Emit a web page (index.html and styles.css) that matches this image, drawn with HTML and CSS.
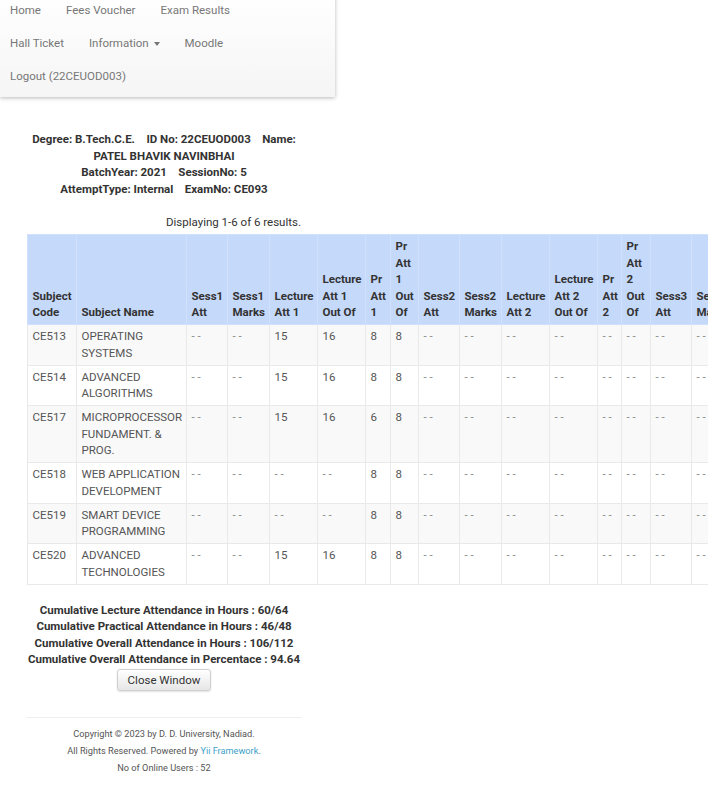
FILE: index.html
```html
<!DOCTYPE html>
<html>
<head>
<meta charset="utf-8">
<link rel="stylesheet" href="styles.css">
</head>
<body>
<div class="navbar">
  <ul class="nav">
    <li><a href="#">Home</a></li>
    <li><a href="#">Fees Voucher</a></li>
    <li><a href="#">Exam Results</a></li>
    <li><a href="#">Hall Ticket</a></li>
    <li><a href="#">Information <span class="caret"></span></a></li>
    <li><a href="#">Moodle</a></li>
    <li><a href="#">Logout (22CEUOD003)</a></li>
  </ul>
</div>

<div class="page">
  <div class="info">
    <div>Degree: B.Tech.C.E.&nbsp;&nbsp;&nbsp; ID No: 22CEUOD003&nbsp;&nbsp;&nbsp; Name: PATEL BHAVIK NAVINBHAI</div>
    <div>BatchYear: 2021&nbsp;&nbsp;&nbsp; SessionNo: 5</div>
    <div>AttemptType: Internal&nbsp;&nbsp;&nbsp; ExamNo: CE093</div>
  </div>

  <div class="summary">Displaying 1-6 of 6 results.</div>

  <table class="items">
    <colgroup>
      <col class="c-code"><col class="c-name"><col class="c-sess"><col class="c-marks"><col class="c-lec"><col class="c-lec"><col class="c-pr"><col class="c-pro">
      <col class="c-sess"><col class="c-marks"><col class="c-lec"><col class="c-lec"><col class="c-pr2"><col class="c-pro2">
      <col class="c-sess"><col class="c-marks"><col class="c-lec"><col class="c-lec"><col class="c-pr"><col class="c-pro">
    </colgroup>
    <thead>
      <tr>
        <th>Subject Code</th>
        <th>Subject Name</th>
        <th>Sess1 Att</th>
        <th>Sess1 Marks</th>
        <th>Lecture Att 1</th>
        <th>Lecture Att 1 Out Of</th>
        <th>Pr Att 1</th>
        <th>Pr Att 1 Out Of</th>
        <th>Sess2 Att</th>
        <th>Sess2 Marks</th>
        <th>Lecture Att 2</th>
        <th>Lecture Att 2 Out Of</th>
        <th>Pr Att 2</th>
        <th>Pr Att 2 Out Of</th>
        <th>Sess3 Att</th>
        <th>Sess3 Marks</th>
        <th>Lecture Att 3</th>
        <th>Lecture Att 3 Out Of</th>
        <th>Pr Att 3</th>
        <th>Pr Att 3 Out Of</th>
      </tr>
    </thead>
    <tbody>
      <tr class="odd">
        <td>CE513</td><td>OPERATING SYSTEMS</td><td class="na">- -</td><td class="na">- -</td><td>15</td><td>16</td><td>8</td><td>8</td><td class="na">- -</td><td class="na">- -</td><td class="na">- -</td><td class="na">- -</td><td class="na">- -</td><td class="na">- -</td><td class="na">- -</td><td class="na">- -</td><td class="na">- -</td><td class="na">- -</td><td class="na">- -</td><td class="na">- -</td>
      </tr>
      <tr class="even">
        <td>CE514</td><td>ADVANCED ALGORITHMS</td><td class="na">- -</td><td class="na">- -</td><td>15</td><td>16</td><td>8</td><td>8</td><td class="na">- -</td><td class="na">- -</td><td class="na">- -</td><td class="na">- -</td><td class="na">- -</td><td class="na">- -</td><td class="na">- -</td><td class="na">- -</td><td class="na">- -</td><td class="na">- -</td><td class="na">- -</td><td class="na">- -</td>
      </tr>
      <tr class="odd">
        <td>CE517</td><td>MICROPROCESSOR FUNDAMENT. &amp; PROG.</td><td class="na">- -</td><td class="na">- -</td><td>15</td><td>16</td><td>6</td><td>8</td><td class="na">- -</td><td class="na">- -</td><td class="na">- -</td><td class="na">- -</td><td class="na">- -</td><td class="na">- -</td><td class="na">- -</td><td class="na">- -</td><td class="na">- -</td><td class="na">- -</td><td class="na">- -</td><td class="na">- -</td>
      </tr>
      <tr class="even">
        <td>CE518</td><td>WEB APPLICATION DEVELOPMENT</td><td class="na">- -</td><td class="na">- -</td><td class="na">- -</td><td class="na">- -</td><td>8</td><td>8</td><td class="na">- -</td><td class="na">- -</td><td class="na">- -</td><td class="na">- -</td><td class="na">- -</td><td class="na">- -</td><td class="na">- -</td><td class="na">- -</td><td class="na">- -</td><td class="na">- -</td><td class="na">- -</td><td class="na">- -</td>
      </tr>
      <tr class="odd">
        <td>CE519</td><td>SMART DEVICE PROGRAMMING</td><td class="na">- -</td><td class="na">- -</td><td class="na">- -</td><td class="na">- -</td><td>8</td><td>8</td><td class="na">- -</td><td class="na">- -</td><td class="na">- -</td><td class="na">- -</td><td class="na">- -</td><td class="na">- -</td><td class="na">- -</td><td class="na">- -</td><td class="na">- -</td><td class="na">- -</td><td class="na">- -</td><td class="na">- -</td>
      </tr>
      <tr class="even">
        <td>CE520</td><td>ADVANCED TECHNOLOGIES</td><td class="na">- -</td><td class="na">- -</td><td>15</td><td>16</td><td>8</td><td>8</td><td class="na">- -</td><td class="na">- -</td><td class="na">- -</td><td class="na">- -</td><td class="na">- -</td><td class="na">- -</td><td class="na">- -</td><td class="na">- -</td><td class="na">- -</td><td class="na">- -</td><td class="na">- -</td><td class="na">- -</td>
      </tr>
    </tbody>
  </table>

  <div class="totals">
    <div>Cumulative Lecture Attendance in Hours : 60/64</div>
    <div>Cumulative Practical Attendance in Hours : 46/48</div>
    <div>Cumulative Overall Attendance in Hours : 106/112</div>
    <div>Cumulative Overall Attendance in Percentace : 94.64</div>
  </div>
  <div class="actions">
    <button class="btn" type="button">Close Window</button>
  </div>

  <div class="footer">
    <div>Copyright &copy; 2023 by D. D. University, Nadiad.</div>
    <div>All Rights Reserved. Powered by <a href="#">Yii Framework</a>.</div>
    <div>No of Online Users : 52</div>
  </div>
</div>
</body>
</html>
```

FILE: styles.css
```css
html, body {
  overflow-x: hidden;
}
body {
  margin: 0;
  font-family: Roboto, "Liberation Sans", sans-serif;
  font-size: 11.5px;
  line-height: 16.5px;
  color: #333;
  background: #fff;
}

.navbar {
  width: 335px;
  margin-top: -6px;
  padding-bottom: 4px;
  background: linear-gradient(to bottom, #ffffff 0%, #f5f5f5 100%);
  box-shadow: 0 1px 4px rgba(0, 0, 0, 0.28);
}
.nav {
  list-style: none;
  margin: 0;
  padding: 0;
  width: 285px;
  display: flex;
  flex-wrap: wrap;
}
.nav li a {
  display: block;
  padding: 8px 15px 8.5px 10px;
  color: #777;
  text-decoration: none;
  font-size: 11.5px;
}
.caret {
  display: inline-block;
  width: 0;
  height: 0;
  margin-left: 2px;
  vertical-align: middle;
  border-top: 4px solid #777;
  border-left: 3.5px solid transparent;
  border-right: 3.5px solid transparent;
}

.page {
  width: 274px;
  padding-left: 27px;
}

.info {
  margin-top: 34px;
  text-align: center;
  font-weight: bold;
}

.summary {
  margin-top: 16.5px;
  text-align: right;
  margin-bottom: 4px;
}

.items {
  border-collapse: collapse;
  table-layout: fixed;
  width: 855px;
}
.c-code { width: 49px; }
.c-name { width: 110px; }
.c-sess { width: 41px; }
.c-marks { width: 42px; }
.c-lec { width: 48px; }
.c-pr { width: 25px; }
.c-pro { width: 28px; }
.c-pr2 { width: 24px; }
.c-pro2 { width: 29px; }

.items th {
  background: #c5d9fb;
  font-weight: bold;
  text-align: left;
  vertical-align: bottom;
  padding: 3px 3px 3.5px 4.5px;
  border: 1px solid #d2e1fb;
  color: #333;
  overflow: visible;
}
.items td {
  vertical-align: top;
  padding: 3px 3px 3.5px 4.5px;
  border: 1px solid #e9e9e9;
  color: #555;
}
.items td.na {
  white-space: nowrap;
  color: #888;
}
.items tr.odd td {
  background: #f9f9f9;
}
.items tr.even td {
  background: #fff;
}

.totals {
  margin-top: 17px;
  text-align: center;
  font-weight: bold;
}
.actions {
  text-align: center;
  margin-top: 1px;
}
.btn {
  font-family: Roboto, "Liberation Sans", sans-serif;
  font-size: 11.5px;
  line-height: 16px;
  color: #333;
  padding: 2px 10px;
  border: 1px solid #d0d0d0;
  border-radius: 3px;
  background: linear-gradient(to bottom, #ffffff 0%, #e6e6e6 100%);
  box-shadow: 0 1px 2px rgba(0, 0, 0, 0.12);
}

.footer {
  margin-top: 26px;
  border-top: 1px solid #eee;
  padding-top: 7px;
  text-align: center;
  font-size: 9.2px;
  line-height: 17px;
  color: #555;
}
.footer a {
  color: #3fa0c9;
  text-decoration: none;
}
```
